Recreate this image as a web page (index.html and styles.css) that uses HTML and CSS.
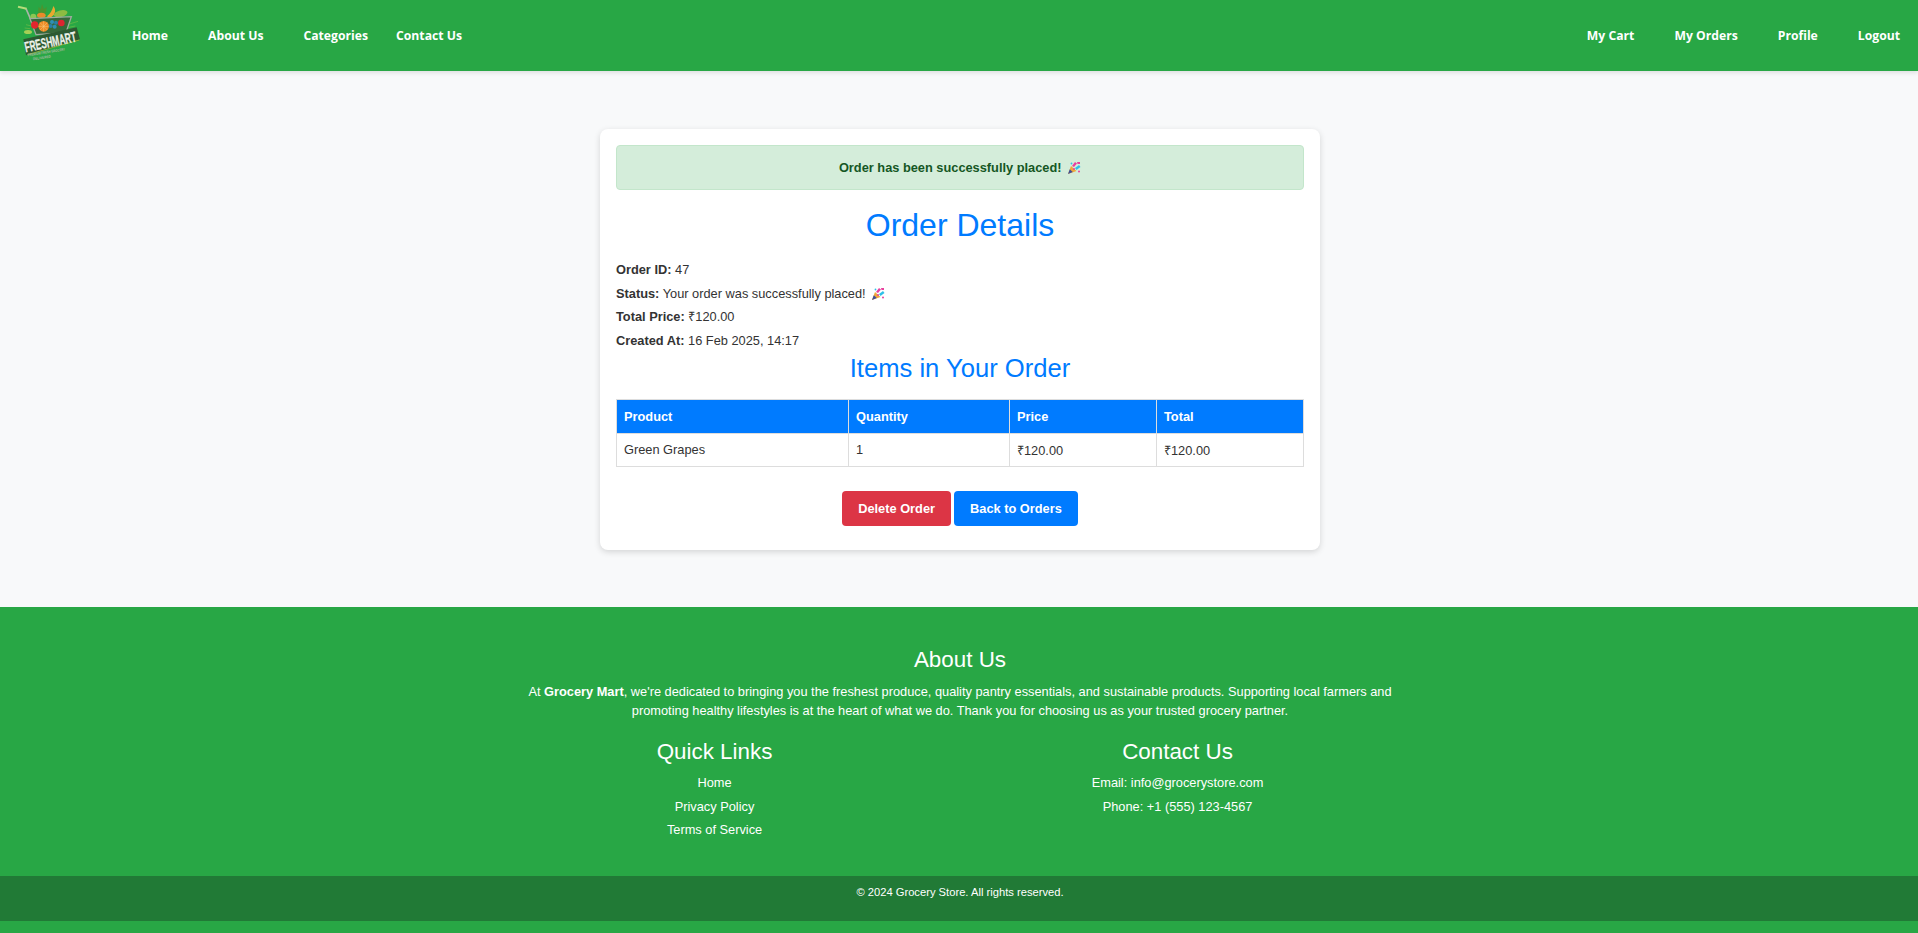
FILE: index.html
```html
<!DOCTYPE html>
<html lang="en">
<head>
    <meta charset="UTF-8">
    <meta name="viewport" content="width=device-width, initial-scale=1.0">
    <title>Order Details</title>
    <link rel="stylesheet" href="styles.css">
</head>
<body>

<!-- navbar -->
<header class="navbar">
    <a href="#" class="logo" aria-label="FreshMart">
        <svg width="66" height="60" viewBox="0 0 198 180">
            <!-- cart handle -->
            <path d="M30 20 L50 66" fill="none" stroke="#aab5a8" stroke-width="5"/>
            <path d="M6 14 L32 20" fill="none" stroke="#b5dc7a" stroke-width="6"/>
            <!-- greens and fruit -->
            <path d="M66 34 L68 14 L74 22 L78 6 L84 22 L92 14 L90 34 Z" fill="#4c9430"/>
            <ellipse cx="76" cy="40" rx="13" ry="8" fill="#e98a2a"/>
            <path d="M94 42 Q108 30 112 12 Q122 24 114 38 Q106 48 94 46 Z" fill="#e8a82f"/>
            <ellipse cx="134" cy="35" rx="21" ry="10" fill="#8dbb42" transform="rotate(-14 134 35)"/>
            <circle cx="52" cy="44" r="9" fill="#8cc653"/>
            <!-- basket -->
            <path d="M42 50 L166 44 L150 92 L60 98 Z" fill="#36683a" stroke="#a0aca0" stroke-width="4"/>
            <circle cx="56" cy="69" r="11" fill="#e3252d"/>
            <circle cx="136" cy="63" r="10" fill="#dd2430"/>
            <circle cx="83" cy="73" r="16" fill="#ee8b25"/>
            <path d="M83 58 V88 M68 73 H98 M72 62 L94 84 M94 62 L72 84" stroke="#f9c97c" stroke-width="1.6"/>
            <circle cx="108" cy="60" r="6" fill="#2d90b6"/>
            <circle cx="120" cy="62" r="6" fill="#2a7fa8"/>
            <circle cx="104" cy="72" r="6" fill="#2a7fa8"/>
            <circle cx="116" cy="74" r="6" fill="#2d90b6"/>
            <ellipse cx="36" cy="90" rx="12" ry="6" fill="#a6cf55"/>
            <path d="M30 68 L46 72 M26 78 L42 80 M160 66 L186 58 M158 76 L178 72" stroke="#6fbb45" stroke-width="2"/>
            <!-- banner and name -->
            <path d="M22 112 L182 76 L192 112 L30 160 Z" fill="#2d5a31"/>
            <path d="M34 158 L190 114" stroke="#86ad3c" stroke-width="3"/>
            <text class="logo-name" transform="translate(29 151) rotate(-12) scale(.57 1)">FRESHMART</text>
            <text class="logo-sub" transform="translate(36 163) rotate(-9) scale(.75 1)">PREMIUM FRESH GROCERY</text>
            <text class="logo-sub" transform="translate(52 175) rotate(-9) scale(.85 1)">DELIVERED</text>
        </svg>
    </a>
    <nav class="nav-left">
        <a href="#">Home</a>
        <a href="#">About Us</a>
        <a href="#" class="nav-tight">Categories</a>
        <a href="#">Contact Us</a>
    </nav>
    <nav class="nav-right">
        <a href="#">My Cart</a>
        <a href="#">My Orders</a>
        <a href="#">Profile</a>
        <a href="#">Logout</a>
    </nav>
</header>

<main class="main">
    <div class="order-card">
        <div class="alert">Order has been successfully placed!
            <svg class="popper" viewBox="0 0 14 14"><use href="#popper"/></svg>
        </div>

        <h1>Order Details</h1>

        <div class="order-info">
            <p><strong>Order ID:</strong> 47</p>
            <p><strong>Status:</strong> Your order was successfully placed!
                <svg class="popper" viewBox="0 0 14 14"><use href="#popper"/></svg>
            </p>
            <p><strong>Total Price:</strong> ₹120.00</p>
            <p><strong>Created At:</strong> 16 Feb 2025, 14:17</p>
        </div>

        <h2>Items in Your Order</h2>

        <table class="order-table">
            <thead>
                <tr>
                    <th class="col-product">Product</th>
                    <th class="col-qty">Quantity</th>
                    <th class="col-price">Price</th>
                    <th>Total</th>
                </tr>
            </thead>
            <tbody>
                <tr>
                    <td>Green Grapes</td>
                    <td>1</td>
                    <td>₹120.00</td>
                    <td>₹120.00</td>
                </tr>
            </tbody>
        </table>

        <div class="actions">
            <a href="#" class="btn btn-red">Delete Order</a>
            <a href="#" class="btn btn-blue">Back to Orders</a>
        </div>
    </div>
</main>

<!-- footer -->
<footer class="footer">
    <div class="footer-about">
        <h3>About Us</h3>
        <p>At <strong>Grocery Mart</strong>, we're dedicated to bringing you the freshest produce, quality pantry essentials, and sustainable products. Supporting local farmers and promoting healthy lifestyles is at the heart of what we do. Thank you for choosing us as your trusted grocery partner.</p>
    </div>
    <div class="footer-cols">
        <div>
            <h3>Quick Links</h3>
            <a href="#">Home</a>
            <a href="#">Privacy Policy</a>
            <a href="#">Terms of Service</a>
        </div>
        <div>
            <h3>Contact Us</h3>
            <p>Email: info@grocerystore.com</p>
            <p>Phone: +1 (555) 123-4567</p>
        </div>
    </div>
    <div class="footer-bottom">© 2024 Grocery Store. All rights reserved.</div>
</footer>

<!-- party popper, used by the alert and the status line -->
<svg class="defs" width="0" height="0">
    <symbol id="popper" viewBox="0 0 14 14">
        <path d="M1 13 L4 5 L9.5 10 Z" fill="#f0a83a"/>
        <path d="M1 13 L2.8 8.2 L5.8 11 Z" fill="#3d4f9a"/>
        <path d="M5 5 L8 1 L10 2.5 L7 6 Z" fill="#e8409e"/>
        <path d="M8 7 L12 4 L13.5 6 L9.5 9 Z" fill="#2fc0e8"/>
        <path d="M10 1 L13 1 L13 3 L10.5 3 Z" fill="#e8409e"/>
        <circle cx="7" cy="8" r="1" fill="#e8409e"/>
        <circle cx="12" cy="10.5" r="1" fill="#e8409e"/>
        <circle cx="4.5" cy="2.5" r=".9" fill="#2fc0e8"/>
    </symbol>
</svg>

</body>
</html>
```

FILE: styles.css
```css
* {
    box-sizing: border-box;
}
body {
    margin: 0;
    font-family: "Liberation Sans", Arial, sans-serif;
    font-size: 12.8px;
    background-color: #f8f9fa;
    color: #333;
}
a {
    color: inherit;
    text-decoration: none;
}
.defs {
    position: absolute;
}

/* navbar */
.navbar {
    display: flex;
    align-items: center;
    height: 71px;
    padding: 0 18px 1px 16px;
    background-color: #28a745;
    box-shadow: 0 2px 4px rgba(0, 0, 0, 0.1);
    font-family: "Open Sans", sans-serif;
    font-size: 12.2px;
    font-weight: 700;
    color: #fff;
}
.logo {
    display: flex;
    width: 66px;
    margin: 0 50px 6px 0;
}
.logo-name {
    font-family: "Liberation Sans", sans-serif;
    font-size: 44px;
    fill: #eef2ea;
    stroke: #eef2ea;
    stroke-width: 0.8px;
}
.logo-sub {
    font-family: "Liberation Sans", sans-serif;
    font-size: 11px;
    font-weight: 700;
    fill: #a9b9a2;
}
.nav-left,
.nav-right {
    display: flex;
    gap: 40px;
}
.nav-tight {
    margin-right: -12px;
}
.nav-right {
    margin-left: auto;
}

/* order card */
.main {
    padding: 58px 0 57px 2px;
}
.order-card {
    width: 720px;
    margin: 0 auto;
    padding: 16px 16px 24px;
    background-color: #fff;
    border-radius: 8px;
    box-shadow: 0 2px 6px rgba(0, 0, 0, 0.15);
}
.alert {
    height: 45px;
    line-height: 44px;
    text-align: center;
    font-weight: 700;
    color: #155724;
    background-color: #d4edda;
    border: 1px solid #c3e6cb;
    border-radius: 4px;
}
.popper {
    width: 14px;
    height: 14px;
    margin-left: 2px;
    vertical-align: -3px;
}
h1 {
    margin: 17px 0 14px;
    text-align: center;
    font-size: 32px;
    font-weight: 400;
    line-height: 37px;
    color: #007bff;
}
h2 {
    margin: 2px 0 17px;
    text-align: center;
    font-size: 25.6px;
    font-weight: 400;
    line-height: 28px;
    color: #007bff;
}
.order-info p {
    margin: 0;
    line-height: 23.5px;
}
.order-table {
    width: 100%;
    border-collapse: collapse;
    table-layout: fixed;
}
.order-table th,
.order-table td {
    height: 33.5px;
    padding: 0 7px;
    text-align: left;
    border: 1px solid #ddd;
}
.order-table th {
    color: #fff;
    background-color: #007bff;
}
.col-product {
    width: 232px;
}
.col-qty {
    width: 161px;
}
.col-price {
    width: 147px;
}
.actions {
    display: flex;
    justify-content: center;
    gap: 3px;
    margin-top: 24px;
}
.btn {
    display: block;
    padding: 0 16px;
    line-height: 35px;
    font-weight: 700;
    color: #fff;
    border-radius: 4px;
}
.btn-red {
    background-color: #dc3545;
}
.btn-blue {
    background-color: #007bff;
}

/* footer */
.footer {
    padding: 39px 0 13px;
    background-color: #28a745;
    color: #fff;
    text-align: center;
}
.footer h3 {
    margin: 0;
    font-size: 22.4px;
    font-weight: 400;
    line-height: 28px;
}
.footer p {
    margin: 0;
}
.footer-about {
    width: 928px;
    margin: 0 auto;
    padding-left: 2px;
}
.footer-about p {
    max-width: 890px;
    margin: 8px auto 0;
    line-height: 19px;
}
.footer-cols {
    display: flex;
    justify-content: space-around;
    width: 928px;
    margin: 18px auto 34px;
    padding-left: 2px;
}
.footer-cols h3 {
    margin-bottom: 5px;
}
.footer-cols a,
.footer-cols p {
    display: block;
    line-height: 23.5px;
}
.footer-bottom {
    height: 45px;
    padding: 8px 0 0 2px;
    font-size: 11.2px;
    line-height: 16px;
    background-color: #217a36;
}
```
